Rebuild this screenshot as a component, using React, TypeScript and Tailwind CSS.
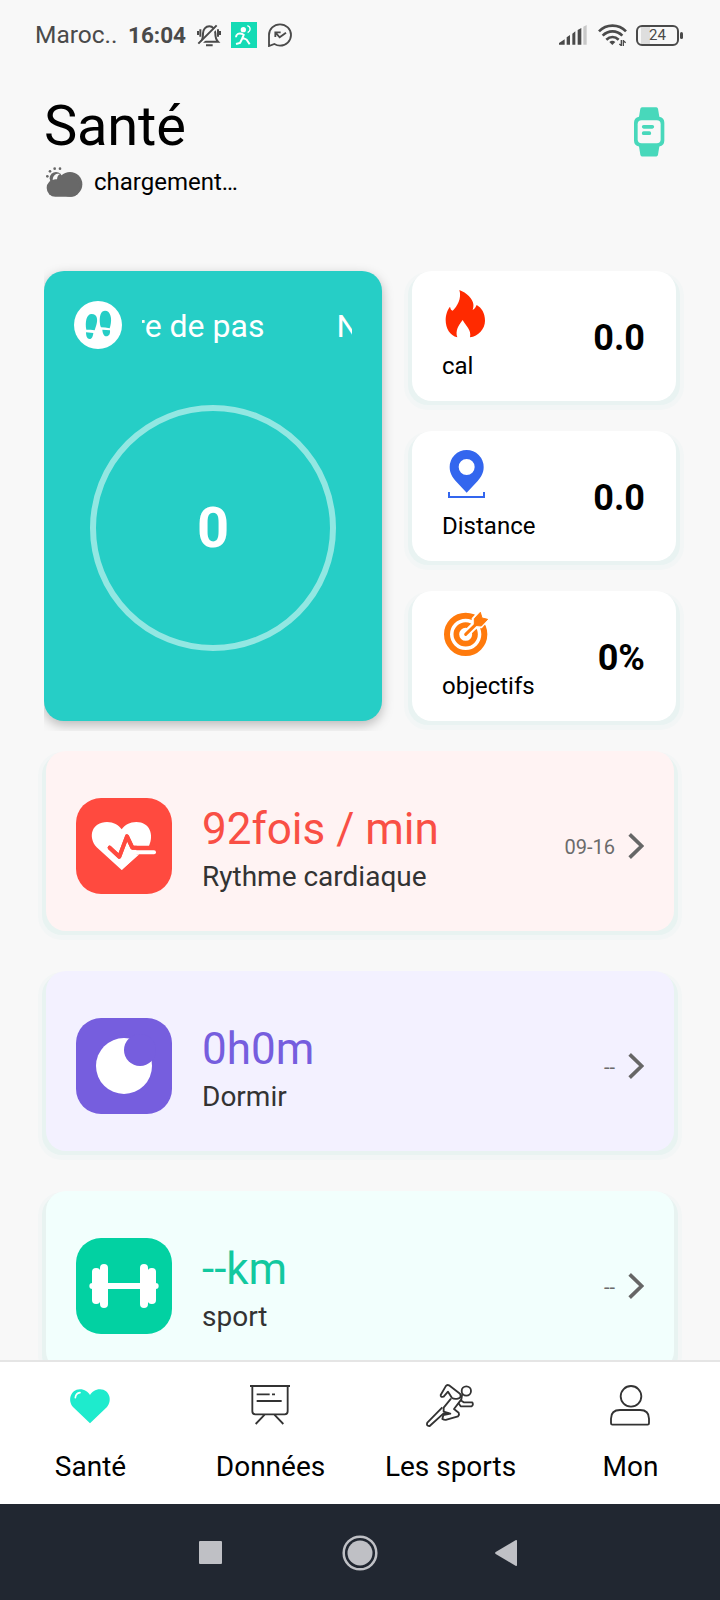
import type { ReactNode } from "react";

function StatusBar() {
  return (
    <header className="flex h-[70px] shrink-0 items-center pl-[35px] text-[#4a4a4a]">
      <span className="w-[93px] text-[24.5px] leading-none">Maroc..</span>
      <span className="w-[68px] text-[22.500px] leading-none font-bold">16:04</span>

      <svg className="ml-px h-6 w-6" viewBox="0 0 72 72" fill="none" stroke="currentColor" strokeWidth="6">
        <path d="M13 56h50c-6-6-8-10-8-25 0-12-8-21-18-21-11 0-19 9-19 21 0 15-1 19-6 25" />
        <path d="M7 66 64 9" strokeWidth="7" stroke="#f8f8f8" />
        <path d="M4 62 59 7M27 67h20M3 24v12M10 19v22M63 19v22M69 24v12" />
      </svg>
      <svg className="ml-2.5 h-[26px] w-[26px]" viewBox="0 0 78 78" fill="none" stroke="#fff" strokeWidth="5">
        <path d="M0 0h78v78H0z" fill="#14dbb5" stroke="none" />
        <circle cx="37" cy="23" r="8" fill="#fff" stroke="none" />
        <path d="M49 11c11 4 11 16 1 21" strokeWidth="4" />
        <path d="M15 46c0-10 8-13 17-11l6 4-5 12-6 12-12 3M34 47l13 6 9 14" strokeWidth="6" />
      </svg>
      <svg className="ml-[11px] h-6 w-6" viewBox="0 0 72 72" fill="none" stroke="currentColor" strokeWidth="5.5">
        <path d="M3 69V36A33 32 0 1 1 36 68c-7 0-12-2-17-5Z" />
        <path d="M22 28l13 15 19-14M22 42V28h16" />
      </svg>

      <svg className="ml-[267px] h-5 w-7" viewBox="0 0 84 60" fill="currentColor">
        <path d="M0 59v-5l17-11v16zM23 59V37l10-7v29zM40 59V26l9-7v40zM56 59V15l11-6v50z" />
        <path d="M73 59V5l10-5v59z" fill="#c8c8c8" />
      </svg>
      <svg className="ml-[11px] h-[22px] w-[29px]" viewBox="0 0 87 66" fill="none" stroke="currentColor" strokeWidth="8">
        <path d="M3 22C25-1 62-1 84 22M14 35c17-17 42-17 59 0M25 47c11-10 26-10 37 0" />
        <path d="m34 54 9 9 9-9c-6-5-12-5-18 0z" fill="currentColor" stroke="none" />
        <path d="M70 48v18M76 48v18M64 60l6 5M76 50l7 6" strokeWidth="4" />
      </svg>
      <div className="relative ml-[9px] flex h-[21px] w-[43px] items-center justify-center rounded-[6px] border-[2.500px] border-[#4a4a4a] bg-[linear-gradient(90deg,transparent_3px,#dedede_3px,#dedede_12px,transparent_12px)] text-[15px] leading-none">
        24
        <span className="absolute top-[5px] -right-[6px] h-[7px] w-[3px] rounded-xs bg-[#4a4a4a]" />
      </div>
    </header>
  );
}

function WatchIcon() {
  return (
    <svg className="mt-[9px] h-[50px] w-[31px]" viewBox="0 0 93 149" fill="#48d8bb">
      <path d="M24 0h43q4 0 5 5l4 24q15 3 15 18v53q0 15-15 18l-4 25q-1 5-5 5H24q-4 0-5-5l-4-25Q0 115 0 100V47q0-15 15-18l4-24q1-5 5-5z" />
      <rect x="11" y="39" width="69" height="69" rx="12" fill="#f8f8f8" />
      <path d="M29 59h26M29 78h17" stroke="#48d8bb" strokeWidth="11" strokeLinecap="round" />
    </svg>
  );
}

function WeatherIcon() {
  return (
    <svg className="h-[31px] w-[38px]" viewBox="0 0 114 93" fill="#686868">
      <circle cx="75" cy="52" r="37" />
      <circle cx="33" cy="34" r="19" />
      <rect x="5" y="37" width="100" height="52" rx="26" />
      <path d="M23 39c1-15 11-20 22-18-7 4-8 9-9 16-5-1-9 0-13 2z" fill="#f8f8f8" />
      <circle cx="7" cy="28" r="4" />
      <circle cx="15" cy="13" r="4" />
      <circle cx="29" cy="5" r="4" />
      <circle cx="45" cy="5" r="4" />
    </svg>
  );
}

function FootprintsIcon() {
  return (
    <svg className="h-12 w-12 shrink-0" viewBox="0 0 144 144" fill="#26cec6">
      <circle cx="72" cy="72" r="72" fill="#fff" />
      <path d="M37 86c-4-22 0-47 16-47 17 0 19 17 14 33l-5 16c-8-2-16-2-25-2zM36 94l22 2c-1 10-4 18-11 18-8 0-11-9-11-20zM81 79c-6-16-6-50 12-50 17 0 22 24 16 46l-2 7c-9-2-17-3-26-3zM85 86l23 2c1 11-3 18-11 18-7 0-11-8-12-20z" />
    </svg>
  );
}

function StepsCard() {
  return (
    <section className="flex h-[450px] w-[338px] flex-col rounded-[20px] bg-[#26cec6] px-[30px] pt-[30px] text-white shadow-[0_4px_12px_rgba(0,0,0,0.26)] [clip-path:inset(-10px_-12px_-10px_0)]">
      <div className="flex items-center">
        <FootprintsIcon />
        {/* scrolling label, caught partway through its loop */}
        <div className="mt-0.5 ml-5 w-[210px] overflow-hidden text-[32px] leading-[42px] whitespace-nowrap">
          <div className="-ml-[95px] flex gap-[72px]">
            <span>Nombre de pas</span>
            <span>Nombre de pas</span>
          </div>
        </div>
      </div>
      <div className="mt-14 flex h-[246px] w-[246px] items-center justify-center self-center rounded-full border-[6px] border-[#92e7e2] text-[56px] leading-none font-bold">
        0
      </div>
    </section>
  );
}

function FlameIcon() {
  return (
    <svg className="h-12 w-12" viewBox="0 0 144 144" fill="#ff2a00">
      <path d="M52 0c22 8 40 26 42 42 1 8-1 14-2 18 6-3 9-8 12-15 15 8 25 25 25 47 0 25-20 46-45 50 5-22-12-34-22-52-12 15-23 32-16 52-22-5-35-27-35-52 0-15 5-31 13-40 2 8 4 11 8 12C45 50 60 25 52 0z" />
    </svg>
  );
}

function PinIcon() {
  return (
    <svg className="h-12 w-12" viewBox="0 0 144 144" fill="#3366ee">
      <path
        fillRule="evenodd"
        d="M74 0a51 51 0 0 1 51 51c0 18-8 31-18 42l-33 35-33-35C31 82 23 69 23 51A51 51 0 0 1 74 0zm0 27a24 24 0 1 0 0 48 24 24 0 0 0 0-48z"
      />
      <path d="M21 126v15h105v-15" fill="none" stroke="#3366ee" strokeWidth="6" />
    </svg>
  );
}

function TargetIcon() {
  return (
    <svg className="h-12 w-12" viewBox="0 0 144 144" fill="none" stroke="#ff7a0c">
      <circle cx="71" cy="73" r="56" strokeWidth="18" />
      <circle cx="71" cy="73" r="28" strokeWidth="17" />
      <path d="M73 71 104 40" stroke="#fff" strokeWidth="22" />
      <path d="M92 52V26L114 2l26 24-22 26z" fill="#fff" stroke="#fff" strokeWidth="6" />
      <path d="M71 73 108 37" strokeWidth="9" strokeLinecap="round" />
      <path d="M97 46V26l18-19 5 17 17 4-19 20z" fill="#ff7a0c" strokeWidth="3" strokeLinejoin="round" />
    </svg>
  );
}

interface StatCardProps {
  icon: ReactNode;
  label: string;
  value: string;
}

function StatCard({ icon, label, value }: StatCardProps) {
  return (
    <div className="flex h-[130px] items-center justify-between rounded-[20px] bg-white pr-[31px] pl-[30px] shadow-[4px_4px_#e9f3f2,-4px_4px_#e9f3f2,0_5px_0_4px_#f2f6f6,4px_5px_0_4px_#f3f6f6,-4px_5px_0_4px_#f3f6f6]">
      <div className="flex h-full flex-col pt-[19px]">
        {icon}
        <span className="mt-4 text-[24px] leading-6">{label}</span>
      </div>
      <span className="mt-[3px] text-[36px] leading-none font-bold">{value}</span>
    </div>
  );
}

function HeartRateIcon() {
  return (
    <svg className="h-24 w-24" viewBox="0 0 288 288" fill="none">
      <path d="M137 216 62 148C34 116 48 72 93 72c20 0 34 9 44 22 10-13 24-22 44-22 40 0 54 38 38 72l-24 18z" fill="#fff" />
      <path d="m180 144 60 6-12 22-46 0z" fill="#ff4a3f" />
      <path d="m101 149 29 27 23-61 16 34h68" stroke="#ff4a3f" strokeWidth="12" strokeLinecap="round" strokeLinejoin="round" />
      <path d="M168 163h66" stroke="#fff" strokeWidth="12" strokeLinecap="round" />
      <path d="M190 169h-48l-5 47z" fill="#fff" />
      <path d="m101 149 29 27 23-61 16 34h12" stroke="#ff4a3f" strokeWidth="12" strokeLinecap="round" strokeLinejoin="round" />
    </svg>
  );
}

function MoonIcon() {
  return (
    <svg className="h-24 w-24" viewBox="0 0 288 288">
      <circle cx="144" cy="144" r="84" fill="#fff" />
      <circle cx="192" cy="96" r="48" fill="#765ede" />
    </svg>
  );
}

function DumbbellIcon() {
  return (
    <svg className="h-24 w-24" viewBox="0 0 288 288" fill="#fff">
      <rect x="40" y="135" width="208" height="18" rx="9" />
      <rect x="48" y="90" width="25" height="108" rx="12" />
      <rect x="72" y="78" width="24" height="132" rx="12" />
      <rect x="192" y="78" width="24" height="132" rx="12" />
      <rect x="215" y="90" width="25" height="108" rx="12" />
      <path d="M60 100h24v88H60zM204 100h24v88h-24z" />
    </svg>
  );
}

interface RecordCardProps {
  icon: ReactNode;
  title: string;
  subtitle: string;
  date: string;
  cardClass: string;
  iconClass: string;
  titleClass: string;
}

function RecordCard({ icon, title, subtitle, date, cardClass, iconClass, titleClass }: RecordCardProps) {
  return (
    <div className={`h-[180px] shrink-0 rounded-[20px] px-[30px] pt-[47px] shadow-[4px_4px_#e8f3f1,-4px_4px_#e8f3f1,0_5px_0_4px_#f2f6f6,4px_5px_0_4px_#f3f6f6,-4px_5px_0_4px_#f3f6f6] ${cardClass}`}>
      <div className="flex h-24 items-center">
        <div className={`h-24 w-24 rounded-[25px] ${iconClass}`}>{icon}</div>
        <div className="ml-[30px] flex flex-1 flex-col gap-3 pt-[5px]">
          <span className={`text-[44px] leading-[44px] ${titleClass}`}>{title}</span>
          <span className="text-[28px] leading-7 text-[#333]">{subtitle}</span>
        </div>
        <span className="mt-0.5 text-[20px] leading-none text-[#6b6b6b]">{date}</span>
        <svg className="-mt-px ml-[13px] h-[26px] w-4" viewBox="0 0 48 78" fill="none" stroke="#666" strokeWidth="11">
          <path d="m5 4 36 35L5 74" />
        </svg>
      </div>
    </div>
  );
}

const records: RecordCardProps[] = [
  {
    icon: <HeartRateIcon />,
    title: "92fois / min",
    subtitle: "Rythme cardiaque",
    date: "09-16",
    cardClass: "bg-[#fff3f3]",
    iconClass: "bg-[#ff4a3f]",
    titleClass: "text-[#f94f45]",
  },
  {
    icon: <MoonIcon />,
    title: "0h0m",
    subtitle: "Dormir",
    date: "--",
    cardClass: "bg-[#f3f1ff]",
    iconClass: "bg-[#765ede]",
    titleClass: "text-[#765ede]",
  },
  {
    icon: <DumbbellIcon />,
    title: "--km",
    subtitle: "sport",
    date: "--",
    cardClass: "bg-[#f2fffd]",
    iconClass: "bg-[#02d1a2]",
    titleClass: "text-[#12c89f]",
  },
];

const tabs = [
  {
    label: "Santé",
    icon: (
      <svg className="h-12 w-12" viewBox="0 0 144 144">
        <path d="M72 124 21 75C5 57 12 23 42 22c14 0 24 8 30 17 6-9 16-17 30-17 30 1 37 35 21 53z" fill="#1eebcd" />
        <path d="M28 47c1-9 6-14 14-15" fill="none" stroke="#fff" strokeWidth="5" strokeLinecap="round" />
      </svg>
    ),
  },
  {
    label: "Données",
    icon: (
      <svg className="h-12 w-12" viewBox="0 0 144 144" fill="none" stroke="#333" strokeWidth="5.5">
        <path d="M12 12h120M19 12v76q0 9 9 9h88q9 0 9-9V12M32 37h39M78 37h9M32 57h75M56 98l-27 28M85 98l27 28" />
      </svg>
    ),
  },
  {
    label: "Les sports",
    icon: (
      <svg className="h-12 w-12" viewBox="0 0 144 144" fill="none" stroke="#333" strokeWidth="5.5" strokeLinejoin="round">
        <circle cx="121" cy="27" r="14" />
        <path d="M44 39 59 13q4-6 10-3l33 25q5 12-4 14-12 4-20-1L66 29 53 44q-10 2-9-5z" />
        <path d="M75 50 53 77v12l20 6-21 4-3 12q7 4 13 2l34-10q5-5 2-11L84 81l22-29 3-18" />
        <path d="M49 76 4 122q-4 11 7 10l41-37 15-2" />
        <path d="M104 55l9 6h26q4 8-2 12h-33L97 63" />
      </svg>
    ),
  },
  {
    label: "Mon",
    icon: (
      <svg className="h-12 w-12" viewBox="0 0 144 144" fill="none" stroke="#333" strokeWidth="5.5">
        <circle cx="75" cy="43" r="31" />
        <path d="M15 124v-14q0-26 27-26h60q27 0 27 26v14q0 4-4 4H19q-4 0-4-4z" />
      </svg>
    ),
  },
];

export default function App() {
  return (
    <div className="flex h-[1600px] w-[720px] flex-col overflow-hidden bg-[#f8f8f8] font-[Roboto,sans-serif] text-black">
      <StatusBar />

      <main className="flex min-h-0 flex-1 flex-col overflow-hidden">
        <div className="flex shrink-0 items-start justify-between pt-7 pr-[55px] pl-11">
          <div>
            <h1 className="text-[56px] leading-[56px] tracking-[-0.2px]">Santé</h1>
            <div className="mt-3 flex h-8 items-center gap-[11px] pl-px text-[24px] leading-none">
              <WeatherIcon />
              <span>chargement…</span>
            </div>
          </div>
          <WatchIcon />
        </div>

        <div className="mt-[73px] flex shrink-0 gap-[30px] pl-11">
          <StepsCard />
          <div className="flex w-[264px] flex-col gap-[30px]">
            <StatCard icon={<FlameIcon />} label="cal" value="0.0" />
            <StatCard icon={<PinIcon />} label="Distance" value="0.0" />
            <StatCard icon={<TargetIcon />} label="objectifs" value="0%" />
          </div>
        </div>

        <div className="mt-[30px] flex flex-col gap-10 px-[46px]">
          {records.map((record) => (
            <RecordCard key={record.subtitle} {...record} />
          ))}
        </div>
      </main>

      <nav className="grid h-36 shrink-0 grid-cols-4 border-t-2 border-[#e5e5e5] bg-white">
        {tabs.map((tab) => (
          <div key={tab.label} className="flex flex-col items-center pt-5">
            {tab.icon}
            <span className="mt-[21px] pl-px text-[28px] leading-8">{tab.label}</span>
          </div>
        ))}
      </nav>

      <footer className="flex h-24 shrink-0 items-center bg-[#212731] pl-[199px]">
        <div className="mt-px h-[23px] w-[23px] rounded-[1px] bg-[#bfc0c5]" />
        <svg className="mt-px ml-[119.500px] h-9 w-9" viewBox="0 0 36 36" fill="#bfc0c5">
          <circle cx="18" cy="18" r="16.3" fill="none" stroke="#bfc0c5" strokeWidth="2.5" />
          <circle cx="18" cy="18" r="12.5" />
        </svg>
        <svg className="mt-px ml-[117px] h-[26px] w-[22px]" viewBox="0 0 22 26" fill="#bfc0c5">
          <path d="M22 1v24q0 1.500-1.500.7L.7 14q-1.200-1 0-2L20.500.3Q22-.5 22 1z" />
        </svg>
      </footer>
    </div>
  );
}
